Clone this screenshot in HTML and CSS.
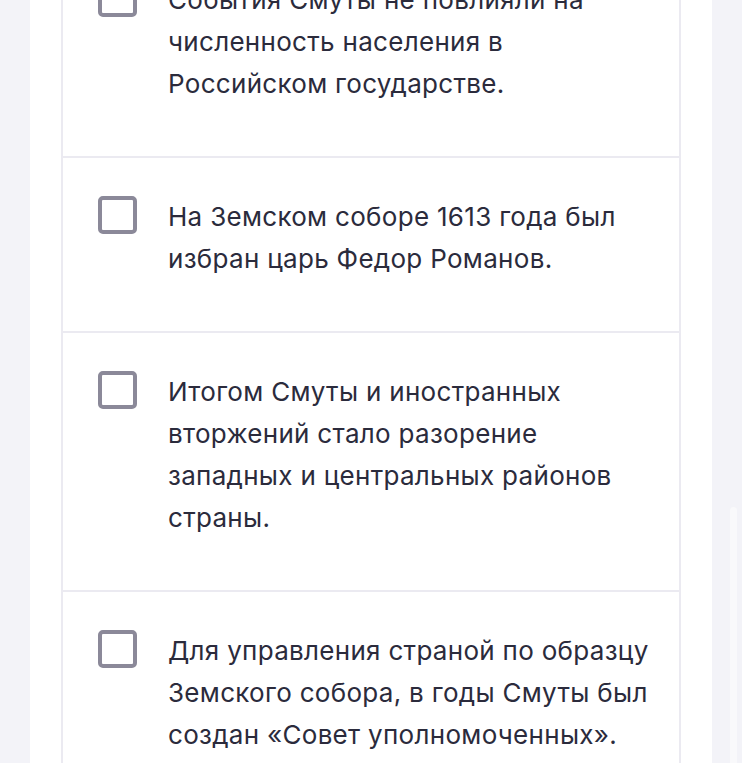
FILE: index.html
```html
<!DOCTYPE html>
<html lang="ru">
<head>
<meta charset="utf-8">
<title>Смута</title>
<link rel="stylesheet" href="styles.css">
</head>
<body>
<div class="page">
  <main class="panel">
    <div class="card">
      <label class="row">
        <span class="box"></span>
        <span class="text">События Смуты не повлияли на численность населения в Российском государстве.</span>
      </label>
      <label class="row">
        <span class="box"></span>
        <span class="text">На Земском соборе 1613 года был избран царь Федор Романов.</span>
      </label>
      <label class="row">
        <span class="box"></span>
        <span class="text">Итогом Смуты и иностранных вторжений стало разорение западных и центральных районов страны.</span>
      </label>
      <label class="row">
        <span class="box"></span>
        <span class="text">Для управления страной по образцу Земского собора, в годы Смуты был создан «Совет уполномоченных».</span>
      </label>
    </div>
  </main>
</div>
<div class="scroll-thumb"></div>
</body>
</html>
```

FILE: styles.css
```css
html, body {
  margin: 0;
  padding: 0;
  background: #f3f3f8;
  height: 100%;
  overflow: hidden;
}

.page {
  display: flex;
  padding-left: 30px;
}

.panel {
  width: 682px;
  background: #ffffff;
  padding: 0 31px;
  box-sizing: border-box;
  min-height: 763px;
}

.card {
  margin-top: -59px;
  border-left: 2px solid #ebeaf1;
  border-right: 2px solid #ebeaf1;
}

.row {
  display: flex;
  align-items: flex-start;
  gap: 31px;
  padding: 38px 18px 51px 35px;
  border-bottom: 2px solid #ebeaf1;
  cursor: pointer;
}

.box {
  flex: 0 0 auto;
  width: 39px;
  height: 38px;
  box-sizing: border-box;
  border: 4px solid #8b8999;
  border-radius: 5px;
  background: #ffffff;
}

.text {
  font-family: Inter, "Noto Sans", sans-serif;
  font-size: 26px;
  letter-spacing: 0.3px;
  line-height: 42px;
  color: #2b2b3c;
}

.scroll-thumb {
  position: fixed;
  right: 5px;
  top: 507px;
  bottom: 0;
  width: 7px;
  background: #f9f9fb;
  border-radius: 4px 4px 0 0;
}
```
